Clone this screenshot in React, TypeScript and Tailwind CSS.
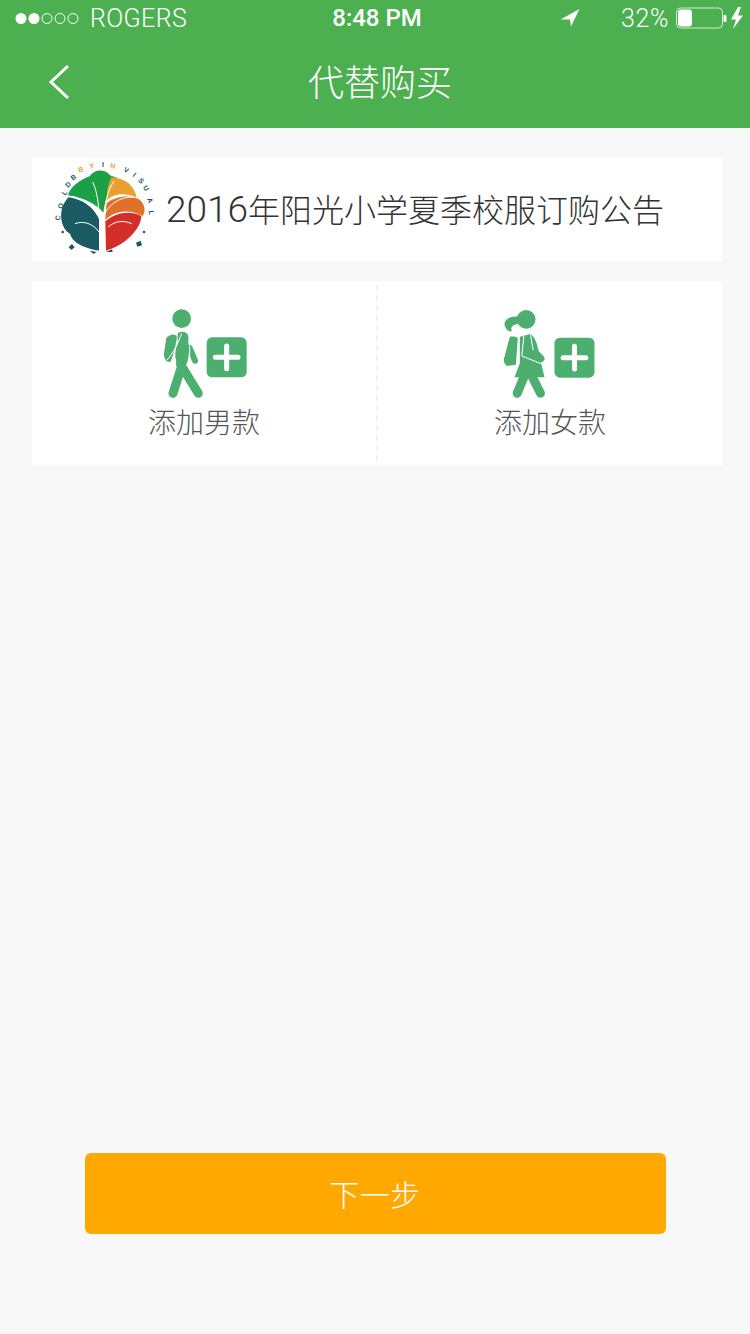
import React from "react";

const CJK = "font-['Noto_Sans_CJK_SC','Liberation_Sans',sans-serif]";

function StatusBar() {
  return (
    <div className="grid h-[36px] grid-cols-[1fr_auto_1fr] items-center pl-[15px] pr-[6px] font-['Roboto',sans-serif] text-white">
      <div className="flex items-center gap-[10px]">
        <svg width="65" height="13" viewBox="0 0 65 13">
          <circle cx="6" cy="6.5" r="5.5" fill="#fff" />
          <circle cx="19" cy="6.5" r="5.5" fill="#fff" />
          <circle cx="32" cy="6.5" r="5" fill="none" stroke="#fff" strokeWidth="1" />
          <circle cx="45" cy="6.5" r="5" fill="none" stroke="#fff" strokeWidth="1" />
          <circle cx="58" cy="6.5" r="5" fill="none" stroke="#fff" strokeWidth="1" />
        </svg>
        <span className="text-[25px] font-light leading-none tracking-[0.4px]">ROGERS</span>
      </div>
      <span className="ml-[-5px] text-[24px] font-medium leading-none">8:48 PM</span>
      <div className="flex items-center justify-end">
        <svg width="20" height="20" viewBox="0 0 20 20" className="mr-[41px]">
          <path d="M0.5 11.5 L19.5 1 L11 18.5 L10 11.5 Z" fill="#fff" />
        </svg>
        <span className="mr-[7px] text-[25px] font-light leading-none tracking-[0.6px]">32%</span>
        <svg width="68" height="24" viewBox="0 0 68 24">
          <rect x="0.5" y="2" width="46" height="20" rx="4" fill="none" stroke="#fff" strokeOpacity="0.75" />
          <rect x="2" y="3.5" width="14" height="17" rx="3" fill="#fff" />
          <rect x="47.5" y="9" width="3" height="7" rx="1" fill="#fff" />
          <path d="M62 1 L55 13.5 H60 L57 23 L67 9.5 H62 L65 1 Z" fill="#fff" />
        </svg>
      </div>
    </div>
  );
}

function Logo() {
  return (
    <svg width="104" height="100" viewBox="36 24 312 300" className="ml-[20px] shrink-0">
      <path d="M84 130 C92 100 122 84 150 72 C162 50 198 50 210 70 L232 78 C208 105 198 130 190 182 C165 152 125 136 84 130 Z" fill="#1ca046" />
      <path d="M86 136 C125 141 160 165 177 198 L177 296 C148 290 100 280 90 245 C62 232 50 170 86 136 Z" fill="#1a5a62" />
      <path d="M214 76 C250 78 282 96 290 137 C250 120 218 126 200 146 C200 115 204 100 214 76 Z" fill="#e8a030" />
      <path d="M199 154 C225 134 265 128 294 140 C312 150 320 175 308 192 C265 170 225 176 196 204 Z" fill="#e0702a" />
      <path d="M196 208 C225 182 270 174 304 192 C302 235 252 280 198 296 Z" fill="#d42e2a" />
      <path d="M158 90 C172 120 180 160 181 298 M222 88 C202 115 192 150 188 298 M98 133 C135 143 165 170 180 204 M290 137 C250 130 210 150 190 192 M105 215 C130 205 160 215 177 240 M205 225 C225 205 255 205 275 215" fill="none" stroke="#fff" strokeWidth="3" />
      <g fontFamily="'Liberation Sans',sans-serif" fontWeight="700" fontSize="21">
        <text x="59" y="206" fill="#1a5a62" transform="rotate(-80 59 206)">C</text>
        <text x="66" y="172" fill="#1a5a62" transform="rotate(-70 66 172)">O</text>
        <text x="76" y="132" fill="#1a5a62" transform="rotate(-55 76 132)">L</text>
        <text x="84" y="108" fill="#1a5a62" transform="rotate(-45 84 108)">D</text>
        <text x="98" y="86" fill="#1a5a62" transform="rotate(-35 98 86)">B</text>
        <text x="118" y="62" fill="#e8a030" transform="rotate(-20 118 62)">B</text>
        <text x="150" y="50" fill="#e8a030" transform="rotate(-10 150 50)">Y</text>
        <text x="186" y="46" fill="#1a5a62">I</text>
        <text x="210" y="48" fill="#e8a030" transform="rotate(8 210 48)">N</text>
        <text x="250" y="58" fill="#1a5a62" transform="rotate(25 250 58)">V</text>
        <text x="277" y="72" fill="#1a5a62" transform="rotate(38 277 72)">I</text>
        <text x="293" y="86" fill="#1a5a62" transform="rotate(48 293 86)">S</text>
        <text x="308" y="106" fill="#1a5a62" transform="rotate(58 308 106)">U</text>
        <text x="321" y="140" fill="#1a5a62" transform="rotate(72 321 140)">A</text>
        <text x="326" y="176" fill="#1a5a62" transform="rotate(85 326 176)">L</text>
      </g>
      <circle cx="68" cy="240" r="4" fill="#1a5a62" />
      <circle cx="312" cy="240" r="4" fill="#1a5a62" />
      <path d="M86 285 L96 276 L104 286 L94 294 Z M288 272 L302 266 L306 280 L292 284 Z M150 296 L170 300 L160 306 Z M198 300 L216 292 L218 300 Z" fill="#1a5a62" />
    </svg>
  );
}

function PlusBadge({ x, y }: { x: number; y: number }) {
  return (
    <g transform={`translate(${x} ${y})`}>
      <rect x="0" y="0" width="120" height="120" rx="16" fill="#4caf70" />
      <path d="M60 26 V94 M26 60 H94" stroke="#fff" strokeWidth="15" strokeLinecap="round" />
    </g>
  );
}

function BoyIcon() {
  return (
    <svg width="130" height="110" viewBox="0 0 390 330">
      <circle cx="128" cy="56" r="28" fill="#4caf70" />
      <path d="M82 114 C92 102 108 100 114 110 C112 130 102 170 94 186 C82 188 74 176 75 160 Z" fill="#4caf70" />
      <path d="M116 100 C138 88 152 102 148 122 C148 150 156 180 132 210 L114 190 C106 170 108 150 116 128 Z" fill="#4caf70" />
      <path d="M152 144 L168 182" stroke="#4caf70" strokeWidth="18" strokeLinecap="round" fill="none" />
      <path d="M128 198 L102 280 M124 192 L178 280" stroke="#4caf70" strokeWidth="27" strokeLinecap="round" fill="none" />
      <path d="M84 180 C102 160 118 130 128 100" stroke="#fff" strokeWidth="3" fill="none" />
      <path d="M152 138 L152 186" stroke="#fff" strokeWidth="3" fill="none" />
      <PlusBadge x={203} y={112} />
    </svg>
  );
}

function GirlIcon() {
  return (
    <svg width="130" height="110" viewBox="13.5 0 390 330">
      <circle cx="137" cy="58" r="28" fill="#4caf70" />
      <path d="M112 50 C92 46 70 58 72 74 C76 90 86 96 94 94 C90 84 94 74 112 72 Z" fill="#4caf70" />
      <path d="M88 110 C98 108 108 110 112 114 L106 194 L80 198 C70 192 68 180 72 170 Z" fill="#4caf70" />
      <path d="M118 110 L150 102 C166 112 172 140 176 164 L192 232 L102 232 L118 190 Z" fill="#4caf70" />
      <path d="M130 232 L110 280 M156 232 L180 280" stroke="#4caf70" strokeWidth="27" strokeLinecap="round" fill="none" />
      <path d="M140 132 L182 176" stroke="#4caf70" strokeWidth="20" strokeLinecap="round" fill="none" />
      <path d="M130 108 L124 168 L184 192 M150 104 L158 150" stroke="#fff" strokeWidth="3" fill="none" />
      <PlusBadge x={222} y={113} />
    </svg>
  );
}

function AddCell({ label, children }: { label: string; children: React.ReactNode }) {
  return (
    <div className="flex flex-1 flex-col items-center pt-[19px]">
      {children}
      <span className={`${CJK} mt-[-9px] text-[28px] font-light leading-[40px] text-[#555555]`}>{label}</span>
    </div>
  );
}

export default function App() {
  return (
    <div className="flex h-[1334px] w-[750px] flex-col bg-[#f8f8f8]">
      <header className="h-[128px] bg-[#4caf50]">
        <StatusBar />
        <div className="relative flex h-[92px] items-center justify-center">
          <svg width="24" height="36" viewBox="0 0 24 36" className="absolute left-[48px] top-[28px]">
            <path d="M20 2 L3 18 L20 34" fill="none" stroke="#fff" strokeWidth="3" />
          </svg>
          <h1 className={`${CJK} mb-[5px] ml-[10px] text-[36px] font-light leading-none text-white`}>代替购买</h1>
        </div>
      </header>

      <main className="flex flex-1 flex-col px-[32px] pt-[30px]">
        <div className="flex h-[103px] w-[690px] items-center bg-white">
          <Logo />
          <span className={`${CJK} ml-[10px] whitespace-nowrap text-[32px] font-light leading-none text-[#333333]`}>
            <span className="font-['Roboto',sans-serif] text-[37px]">2016</span>年阳光小学夏季校服订购公告
          </span>
        </div>

        <div className="mt-[20px] flex h-[184px] w-[690px] bg-white">
          <AddCell label="添加男款">
            <BoyIcon />
          </AddCell>
          <div className="my-[4px] border-l-2 border-dashed border-[#f3f3f3]" />
          <AddCell label="添加女款">
            <GirlIcon />
          </AddCell>
        </div>

        <button className={`${CJK} mx-auto mt-[688px] h-[81px] w-[581px] rounded-[6px] bg-[#ffa800] text-[30px] tracking-[0.5px] font-light text-white`}>
          下一步
        </button>
      </main>
    </div>
  );
}
